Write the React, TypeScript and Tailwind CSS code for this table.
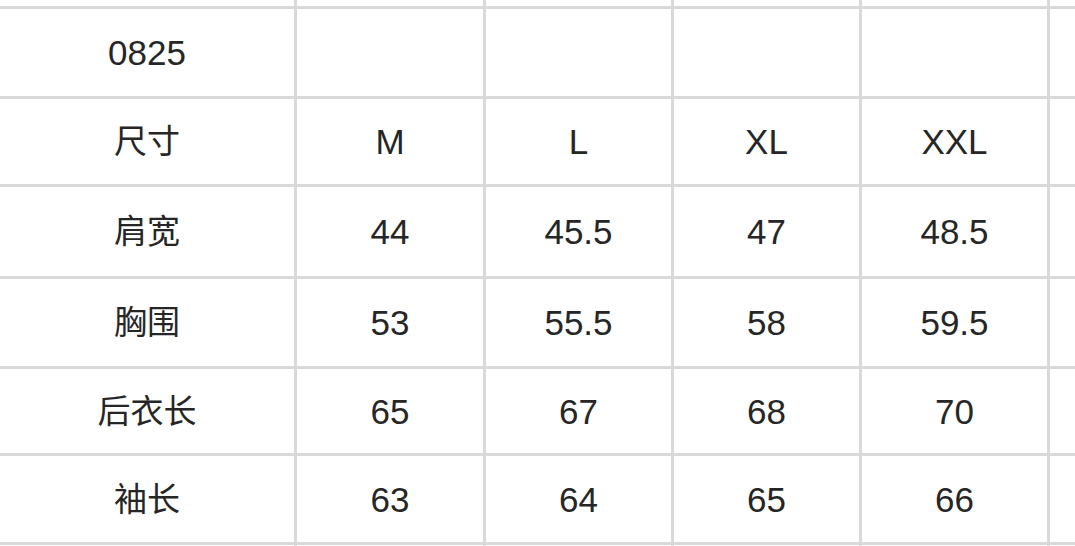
const rows: string[][] = [
  ["", "", "", "", "", ""],
  ["0825", "", "", "", "", ""],
  ["尺寸", "M", "L", "XL", "XXL", ""],
  ["肩宽", "44", "45.5", "47", "48.5", ""],
  ["胸围", "53", "55.5", "58", "59.5", ""],
  ["后衣长", "65", "67", "68", "70", ""],
  ["袖长", "63", "64", "65", "66", ""],
  ["", "", "", "", "", ""],
];

// CJK labels read a touch smaller than the Latin digits in the source
const isCjk = (text: string) => /[\u4e00-\u9fff]/.test(text);

export default function App() {
  return (
    <div className="h-[546px] w-[1075px] overflow-hidden bg-white">
      <div
        className="grid h-[546px] grid-cols-[294px_186px_185px_185px_185px_1fr] grid-rows-[6px_87px_85px_89px_87px_84px_86px_1px] gap-[3px] bg-[#d9d9d9] text-[#262626]"
        style={{ fontFamily: '"Liberation Sans", "Noto Sans CJK SC", sans-serif' }}
      >
        {rows.map((row, r) =>
          row.map((cell, c) => (
            <div
              key={`${r}-${c}`}
              className={`flex items-center justify-center overflow-hidden bg-white leading-none ${
                isCjk(cell) ? "text-[33px]" : "text-[35px]"
              }`}
            >
              {cell}
            </div>
          ))
        )}
      </div>
    </div>
  );
}
